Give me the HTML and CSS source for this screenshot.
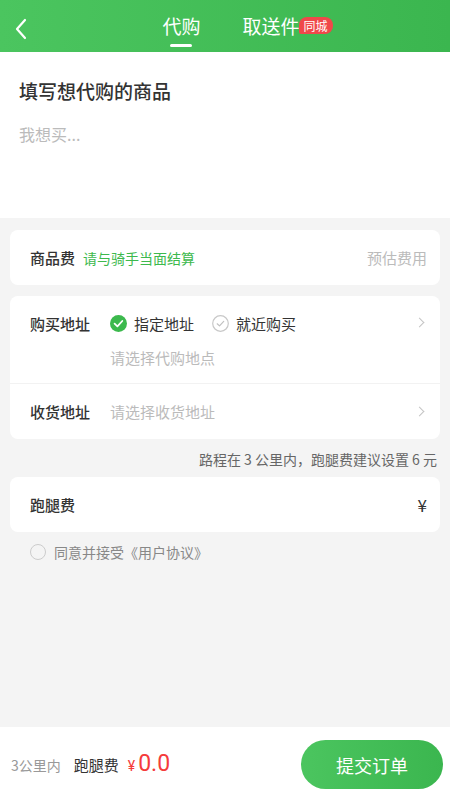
FILE: index.html
```html
<!DOCTYPE html>
<html lang="zh-CN">
<head>
  <meta charset="UTF-8" />
  <meta name="viewport" content="width=device-width, initial-scale=1.0" />
  <title>代购</title>
  <link rel="stylesheet" href="styles.css">
</head>
<body>
  <header class="topbar">
    <div class="back">
      <svg width="14" height="22" viewBox="0 0 14 22"><path d="M11 2 L3 11 L11 20" fill="none" stroke="#fff" stroke-width="2.2" stroke-linecap="round" stroke-linejoin="round"/></svg>
    </div>
    <nav class="tabs">
      <div class="tab active">代购</div>
      <div class="tab">取送件<span class="badge">同城</span></div>
    </nav>
  </header>

  <section class="goods">
    <div class="goods-title">填写想代购的商品</div>
    <div class="goods-input">我想买...</div>
  </section>

  <main class="content">
    <div class="card">
      <div class="row">
        <span class="label">商品费</span>
        <span class="green">请与骑手当面结算</span>
        <span class="right muted">预估费用</span>
      </div>
    </div>

    <div class="card">
      <div class="row addr-row">
        <div class="addr-main">
          <div class="addr-top">
            <span class="label">购买地址</span>
            <span class="option">
              <svg width="17" height="17" viewBox="0 0 17 17"><circle cx="8.5" cy="8.5" r="8.5" fill="#3cb94d"/><path d="M4.6 8.7 L7.4 11.3 L12.3 6" fill="none" stroke="#fff" stroke-width="1.8" stroke-linecap="round" stroke-linejoin="round"/></svg>
              指定地址
            </span>
            <span class="option">
              <svg width="17" height="17" viewBox="0 0 17 17"><circle cx="8.5" cy="8.5" r="7.8" fill="none" stroke="#c8c8c8" stroke-width="1.2"/><path d="M5.2 8.8 L7.5 10.9 L11.7 6.4" fill="none" stroke="#c0c0c0" stroke-width="1.2" stroke-linecap="round" stroke-linejoin="round"/></svg>
              就近购买
            </span>
          </div>
          <div class="hint">请选择代购地点</div>
        </div>
        <span class="chev"></span>
      </div>
      <div class="row">
        <span class="label">收货地址</span>
        <span class="hint-inline">请选择收货地址</span>
        <span class="chev"></span>
      </div>
    </div>

    <div class="note">路程在 3 公里内，跑腿费建议设置 6 元</div>

    <div class="card">
      <div class="row">
        <span class="label">跑腿费</span>
        <span class="right yen">¥</span>
      </div>
    </div>

    <div class="agree">
      <span class="radio"></span>
      同意并接受《用户协议》
    </div>
  </main>

  <footer class="bottombar">
    <div class="sum">
      <span class="dist">3公里内</span>
      <span class="fee">跑腿费</span>
      <span class="price"><small>¥</small>0.0</span>
    </div>
    <button class="submit">提交订单</button>
  </footer>
</body>
</html>
```

FILE: styles.css
```css
body {
  margin: 0;
  height: 800px;
  display: flex;
  flex-direction: column;
  background-color: #f4f4f4;
  font-family: "Noto Sans CJK SC", "Noto Sans", sans-serif;
  color: #333;
}
.topbar {
  height: 52px;
  background: linear-gradient(90deg, #4bc55f, #3bb64f);
  display: flex;
  align-items: center;
  position: relative;
}
.back {
  position: absolute;
  left: 14px;
  top: 18px;
}
.tabs {
  flex: 1;
  display: flex;
  justify-content: center;
  gap: 42px;
  padding-left: 12px;
}
.tab {
  color: #fff;
  font-size: 19px;
  line-height: 52px;
  position: relative;
}
.tab.active::after {
  content: "";
  position: absolute;
  left: 50%;
  bottom: 5px;
  width: 22px;
  height: 3px;
  margin-left: -11px;
  border-radius: 2px;
  background-color: #fff;
}
.badge {
  position: absolute;
  left: 56px;
  top: 17px;
  background-color: #f0484a;
  color: #fff;
  font-size: 12px;
  line-height: 17px;
  padding: 0 5px;
  border-radius: 8px 8px 8px 2px;
  white-space: nowrap;
}
.goods {
  background-color: #fff;
  height: 166px;
  padding: 0 19px;
}
.goods-title {
  font-size: 19px;
  font-weight: 500;
  margin-top: 24px;
  line-height: 30px;
}
.goods-input {
  margin-top: 14px;
  font-size: 16px;
  color: #bbb;
  line-height: 28px;
}
.content {
  flex: 1;
  padding: 12px 10px 0;
  display: flex;
  flex-direction: column;
}
.card {
  background-color: #fff;
  border-radius: 8px;
  margin-bottom: 11px;
}
.row {
  display: flex;
  align-items: center;
  padding: 0 13px 0 20px;
  height: 55px;
}
.row + .row {
  border-top: 1px solid #f2f2f2;
}
.label {
  font-size: 15px;
  font-weight: 500;
  color: #333;
  width: 80px;
  flex-shrink: 0;
}
.card:first-child .label {
  width: auto;
  margin-right: 8px;
}
.green {
  color: #3db94d;
  font-size: 14px;
}
.right {
  margin-left: auto;
}
.muted {
  color: #bbb;
  font-size: 15px;
}
.addr-row {
  height: 87px;
  align-items: flex-start;
}
.addr-main {
  flex: 1;
}
.addr-top {
  display: flex;
  align-items: center;
  height: 54px;
}
.option {
  display: flex;
  align-items: center;
  gap: 7px;
  font-size: 15px;
  color: #333;
  margin-right: 18px;
}
.option svg {
  display: block;
}
.hint {
  padding-left: 80px;
  font-size: 15px;
  color: #bbb;
  margin-top: -3px;
}
.hint-inline {
  font-size: 15px;
  color: #bbb;
  flex: 1;
}
.addr-row .chev {
  margin-top: 23px;
}
.chev {
  width: 6px;
  height: 6px;
  border-top: 1.3px solid #c4c4c4;
  border-right: 1.3px solid #c4c4c4;
  transform: rotate(45deg);
  margin-left: auto;
  margin-right: 4px;
}
.note {
  text-align: right;
  font-size: 14px;
  color: #666;
  margin: 0 3px 9px 0;
  line-height: 18px;
}
.yen {
  font-size: 17px;
  color: #333;
}
.agree {
  display: flex;
  align-items: center;
  gap: 8px;
  padding-left: 20px;
  margin-top: -1px;
  font-size: 14px;
  color: #888;
}
.radio {
  width: 14px;
  height: 14px;
  border: 1px solid #ccc;
  border-radius: 50%;
}
.bottombar {
  height: 73px;
  background-color: #fff;
  display: flex;
  align-items: center;
  padding: 0 7px 0 11px;
}
.sum {
  flex: 1;
  display: flex;
  align-items: baseline;
}
.dist {
  font-size: 14px;
  color: #999;
  margin-right: 13px;
}
.fee {
  font-size: 15px;
  color: #333;
  margin-right: 9px;
}
.price {
  color: #f53b3b;
  font-size: 23px;
  font-family: "Roboto", sans-serif;
}
.price small {
  font-size: 14px;
  margin-right: 3px;
}
.submit {
  width: 142px;
  height: 49px;
  border: none;
  border-radius: 25px;
  background: linear-gradient(90deg, #4bc55f, #3bb64f);
  color: #fff;
  font-family: inherit;
  font-size: 18px;
  margin-top: 2px;
}
```
